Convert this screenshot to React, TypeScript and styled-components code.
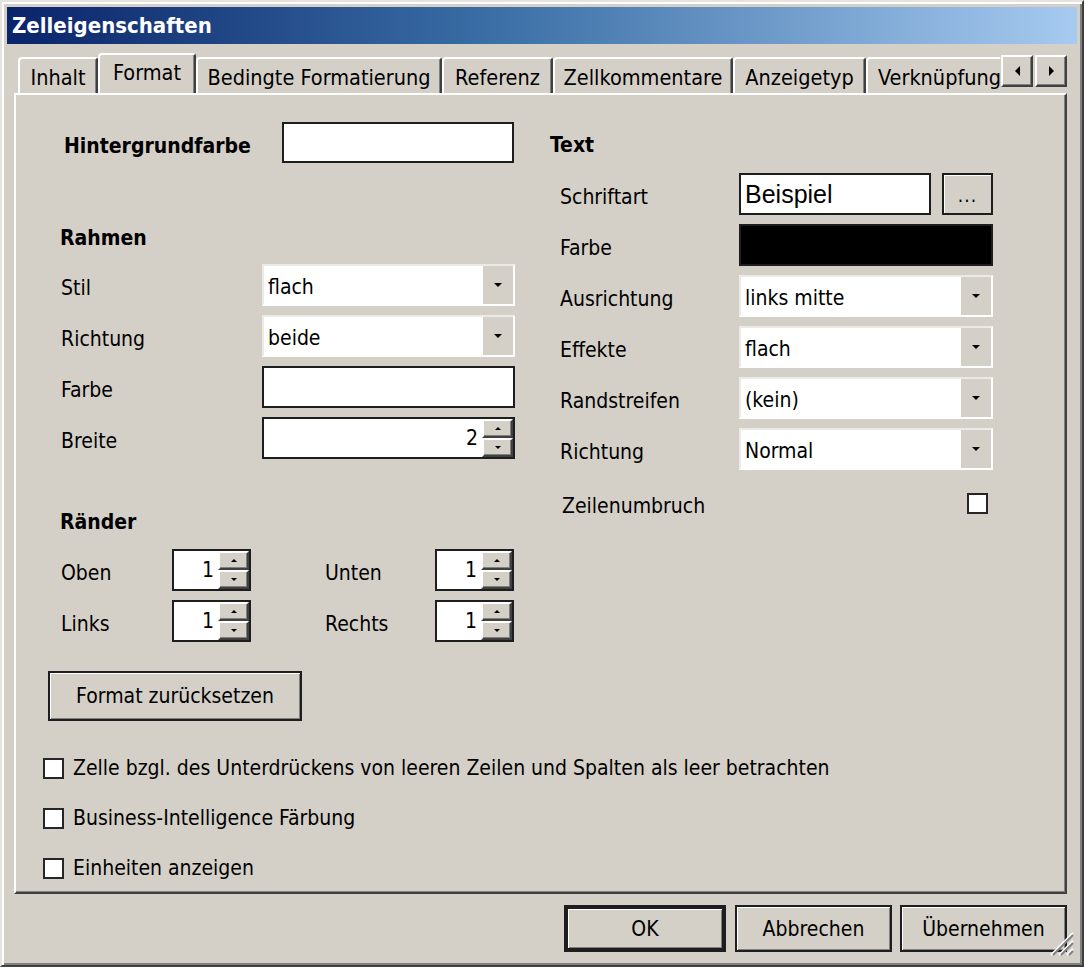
import React from "react";
import styled, { createGlobalStyle } from "styled-components";

const UI_FONT = `"DejaVu Sans Condensed", "DejaVu Sans", "Liberation Sans", sans-serif`;

const GlobalStyle = createGlobalStyle`
  html, body {
    margin: 0;
    padding: 0;
    background: #d4d0c8;
  }
  body {
    font-family: ${UI_FONT};
  }
`;

const Window = styled.div`
  position: relative;
  box-sizing: border-box;
  width: 1084px;
  height: 967px;
  display: flex;
  flex-direction: column;
  padding: 5px 5px 0 5px;
  background: #d4d0c8;
  border: 2px solid;
  border-color: #e6e3de #404040 #404040 #e6e3de;
  box-shadow: inset 2px 2px #ffffff, inset -2px -2px #808080;
  font-family: ${UI_FONT};
  font-stretch: condensed;
  font-size: 21px;
  color: #000;
`;

const TitleBar = styled.div`
  height: 37px;
  display: flex;
  align-items: center;
  padding-left: 5px;
  background: linear-gradient(to right, #0a246a 0%, #3a6ea5 45%, #a6caf0 100%);
  color: #fff;
  font-weight: bold;
  font-size: 22px;
`;

const Body = styled.div`
  display: flex;
  flex-direction: column;
  padding: 0 10px 0 7px;
`;

const TabStrip = styled.div`
  display: flex;
  height: 40px;
  margin-top: 9px;
  padding-left: 4px;
`;

const TabList = styled.div`
  flex: 1;
  display: flex;
  align-items: flex-end;
  overflow: hidden;
  position: relative;
  z-index: 1;
  font-size: 21.5px;
`;

const Tab = styled.div<{ $w: number; $active?: boolean }>`
  flex: none;
  box-sizing: border-box;
  width: ${(p) => p.$w}px;
  height: ${(p) => (p.$active ? 42 : 36)}px;
  margin-bottom: ${(p) => (p.$active ? -2 : 0)}px;
  display: flex;
  align-items: center;
  justify-content: center;
  padding-bottom: ${(p) => (p.$active ? 6 : 0)}px;
  padding-top: ${(p) => (p.$active ? 0 : 2)}px;
  background: #d4d0c8;
  border-top: 2px solid #ffffff;
  border-left: 2px solid #ffffff;
  border-right: 2px solid #404040;
  border-top-left-radius: 4px;
  border-top-right-radius: 3px;
  box-shadow: inset -1px 0 #808080;
  white-space: nowrap;
  overflow: hidden;
`;

const ClipTab = styled(Tab)`
  justify-content: flex-start;
  padding-left: 10px;
`;

const ArrowPair = styled.div`
  display: flex;
  gap: 2px;
  margin-left: 1px;
  margin-top: 2px;
`;

const ArrowButton = styled.div`
  box-sizing: border-box;
  width: 32px;
  height: 32px;
  display: flex;
  align-items: center;
  justify-content: center;
  background: #d4d0c8;
  border: 2px solid;
  border-color: #ffffff #404040 #404040 #ffffff;
  box-shadow: inset -1px -1px #808080;
`;

const Panel = styled.div`
  box-sizing: border-box;
  height: 801px;
  display: flex;
  flex-direction: column;
  border: 2px solid;
  border-color: #ffffff #404040 #404040 #ffffff;
  box-shadow: inset -1px -1px #808080;
`;

const Columns = styled.div`
  display: flex;
  padding-left: 32px;
`;

const LeftCol = styled.div`
  width: 467px;
  display: flex;
  flex-direction: column;
`;

const RightCol = styled.div`
  width: 443px;
  margin-left: 35px;
  display: flex;
  flex-direction: column;
`;

const Heading = styled.div<{ $top: number; $indent: number }>`
  height: 30px;
  line-height: 30px;
  margin-top: ${(p) => p.$top}px;
  padding-left: ${(p) => p.$indent}px;
  font-weight: bold;
`;

const BgRow = styled.div`
  display: grid;
  grid-template-columns: 218px 232px;
  align-items: center;
  height: 41px;
  margin-top: 27px;
  padding-left: 16px;
  font-weight: bold;
`;

const FieldGrid = styled.div<{ $cols: string; $top: number; $indent: number }>`
  display: grid;
  grid-template-columns: ${(p) => p.$cols};
  grid-auto-rows: 42px;
  row-gap: 9px;
  align-items: center;
  margin-top: ${(p) => p.$top}px;
  padding-left: ${(p) => p.$indent}px;
`;

const Label = styled.span`
  padding-top: 6px;
  white-space: nowrap;
`;

const EditBox = styled.div<{ $black?: boolean }>`
  box-sizing: border-box;
  height: 100%;
  background: ${(p) => (p.$black ? "#000" : "#fff")};
  border: 2px solid #1e1e1e;
`;

const FontBox = styled(EditBox)`
  width: 192px;
  display: flex;
  align-items: center;
  padding-left: 4px;
  font-family: "Liberation Sans", Arial, sans-serif;
  font-stretch: normal;
  font-size: 25px;
`;

const FontCell = styled.div`
  height: 100%;
  display: flex;
  gap: 11px;
`;

const DotsButton = styled.div`
  box-sizing: border-box;
  width: 51px;
  height: 100%;
  display: flex;
  align-items: center;
  justify-content: center;
  padding-top: 2px;
  border: 2px solid #1e1e1e;
  box-shadow: inset 1px 1px #ffffff;
  font-size: 19px;
  letter-spacing: 1px;
`;

const Combo = styled.div`
  box-sizing: border-box;
  height: 100%;
  display: flex;
  align-items: center;
  background: #fff;
  border: 2px solid;
  border-color: #eceae6 #ffffff #ffffff #eceae6;
  padding-left: 4px;
`;

const ComboValue = styled.span`
  flex: 1;
  padding-top: 3px;
  white-space: nowrap;
`;

const DropButton = styled.div`
  align-self: stretch;
  width: 30px;
  display: flex;
  align-items: center;
  justify-content: center;
  background: #d4d0c8;
`;

const Triangle = styled.span<{ $dir: "down" | "up" | "left" | "right"; $s: number }>`
  width: 0;
  height: 0;
  border-style: solid;
  border-color: transparent;
  ${(p) =>
    p.$dir === "down"
      ? `border-width: ${p.$s}px ${p.$s}px 0 ${p.$s}px; border-top-color: #000;`
      : p.$dir === "up"
      ? `border-width: 0 ${p.$s}px ${p.$s}px ${p.$s}px; border-bottom-color: #000;`
      : p.$dir === "left"
      ? `border-width: ${p.$s}px ${p.$s}px ${p.$s}px 0; border-right-color: #000;`
      : `border-width: ${p.$s}px 0 ${p.$s}px ${p.$s}px; border-left-color: #000;`}
`;

const Spin = styled.div`
  box-sizing: border-box;
  height: 100%;
  display: flex;
  background: #fff;
  border: 2px solid #1e1e1e;
`;

const SpinValue = styled.span`
  flex: 1;
  display: flex;
  align-items: center;
  justify-content: flex-end;
  padding-right: 4px;
`;

const SpinButtons = styled.div`
  width: 31px;
  display: flex;
  flex-direction: column;
`;

const SpinHalf = styled.div`
  flex: 1;
  box-sizing: border-box;
  display: flex;
  align-items: center;
  justify-content: center;
  background: #d4d0c8;
  border: 2px solid;
  border-color: #ffffff #404040 #404040 #ffffff;
  box-shadow: inset -1px -1px #808080;
`;

const PushButton = styled.div<{ $w: number; $h: number; $default?: boolean; $gap?: number }>`
  box-sizing: border-box;
  width: ${(p) => p.$w}px;
  height: ${(p) => p.$h}px;
  margin-left: ${(p) => p.$gap ?? 0}px;
  display: flex;
  align-items: center;
  justify-content: center;
  background: #d4d0c8;
  border: ${(p) => (p.$default ? 4 : 2)}px solid #1e1e1e;
  box-shadow: inset 1px 1px #ffffff, inset -1px -1px #808080;
  white-space: nowrap;
`;

const ResetWrap = styled.div`
  margin-top: 29px;
`;

const WrapRow = styled.div`
  height: 42px;
  margin-top: 12px;
  display: flex;
  align-items: center;
  justify-content: space-between;
  padding: 0 5px 0 12px;
`;

const CheckBox = styled.span`
  box-sizing: border-box;
  flex: none;
  width: 21px;
  height: 21px;
  background: #fff;
  border: 2px solid #262626;
`;

const CheckList = styled.div`
  margin-top: 22px;
  padding-left: 27px;
  display: flex;
  flex-direction: column;
`;

const CheckRow = styled.div`
  height: 50px;
  display: flex;
  align-items: center;
  gap: 9px;
  white-space: nowrap;
`;

const ButtonRow = styled.div`
  display: flex;
  justify-content: flex-end;
  margin-top: 11px;
`;

const Grip = styled.svg`
  position: absolute;
  right: 7px;
  bottom: 8px;
`;

const tabs = [
  { label: "Inhalt", w: 80 },
  { label: "Format", w: 98, active: true },
  { label: "Bedingte Formatierung", w: 246 },
  { label: "Referenz", w: 111 },
  { label: "Zellkommentare", w: 180 },
  { label: "Anzeigetyp", w: 133 },
];

const ComboField = ({ value }: { value: string }) => (
  <Combo>
    <ComboValue>{value}</ComboValue>
    <DropButton>
      <Triangle $dir="down" $s={4} />
    </DropButton>
  </Combo>
);

const SpinField = ({ value }: { value: string }) => (
  <Spin>
    <SpinValue>{value}</SpinValue>
    <SpinButtons>
      <SpinHalf>
        <Triangle $dir="up" $s={3} />
      </SpinHalf>
      <SpinHalf>
        <Triangle $dir="down" $s={3} />
      </SpinHalf>
    </SpinButtons>
  </Spin>
);

export default function App() {
  return (
    <>
      <GlobalStyle />
      <Window>
        <TitleBar>Zelleigenschaften</TitleBar>
        <Body>
          <TabStrip>
            <TabList>
              {tabs.map((t) => (
                <Tab key={t.label} $w={t.w} $active={t.active}>
                  {t.label}
                </Tab>
              ))}
              <ClipTab $w={170}>Verknüpfung</ClipTab>
            </TabList>
            <ArrowPair>
              <ArrowButton>
                <Triangle $dir="left" $s={5} />
              </ArrowButton>
              <ArrowButton>
                <Triangle $dir="right" $s={5} />
              </ArrowButton>
            </ArrowPair>
          </TabStrip>

          <Panel>
            <Columns>
              <LeftCol>
                <BgRow>
                  <Label>Hintergrundfarbe</Label>
                  <EditBox />
                </BgRow>

                <Heading $top={60} $indent={12}>
                  Rahmen
                </Heading>
                <FieldGrid $cols="201px 253px" $top={11} $indent={13}>
                  <Label>Stil</Label>
                  <ComboField value="flach" />
                  <Label>Richtung</Label>
                  <ComboField value="beide" />
                  <Label>Farbe</Label>
                  <EditBox />
                  <Label>Breite</Label>
                  <SpinField value="2" />
                </FieldGrid>

                <Heading $top={48} $indent={12}>
                  Ränder
                </Heading>
                <FieldGrid $cols="111px 79px 74px 110px 79px" $top={12} $indent={13}>
                  <Label>Oben</Label>
                  <SpinField value="1" />
                  <span />
                  <Label>Unten</Label>
                  <SpinField value="1" />
                  <Label>Links</Label>
                  <SpinField value="1" />
                  <span />
                  <Label>Rechts</Label>
                  <SpinField value="1" />
                </FieldGrid>

                <ResetWrap>
                  <PushButton $w={254} $h={50}>
                    Format zurücksetzen
                  </PushButton>
                </ResetWrap>
              </LeftCol>

              <RightCol>
                <Heading $top={35} $indent={0}>
                  Text
                </Heading>
                <FieldGrid $cols="179px 254px" $top={13} $indent={10}>
                  <Label>Schriftart</Label>
                  <FontCell>
                    <FontBox>Beispiel</FontBox>
                    <DotsButton>...</DotsButton>
                  </FontCell>
                  <Label>Farbe</Label>
                  <EditBox $black />
                  <Label>Ausrichtung</Label>
                  <ComboField value="links mitte" />
                  <Label>Effekte</Label>
                  <ComboField value="flach" />
                  <Label>Randstreifen</Label>
                  <ComboField value="(kein)" />
                  <Label>Richtung</Label>
                  <ComboField value="Normal" />
                </FieldGrid>
                <WrapRow>
                  <Label>Zeilenumbruch</Label>
                  <CheckBox />
                </WrapRow>
              </RightCol>
            </Columns>

            <CheckList>
              <CheckRow>
                <CheckBox />
                Zelle bzgl. des Unterdrückens von leeren Zeilen und Spalten als leer betrachten
              </CheckRow>
              <CheckRow>
                <CheckBox />
                Business-Intelligence Färbung
              </CheckRow>
              <CheckRow>
                <CheckBox />
                Einheiten anzeigen
              </CheckRow>
            </CheckList>
          </Panel>

          <ButtonRow>
            <PushButton $w={162} $h={47} $default>
              OK
            </PushButton>
            <PushButton $w={157} $h={47} $gap={9}>
              Abbrechen
            </PushButton>
            <PushButton $w={167} $h={47} $gap={8}>
              Übernehmen
            </PushButton>
          </ButtonRow>
        </Body>
        <Grip width="30" height="30" viewBox="0 0 30 30">
          <g strokeWidth="2">
            <line x1="28" y1="6" x2="6" y2="28" stroke="#fff" />
            <line x1="28" y1="8" x2="8" y2="28" stroke="#808080" />
            <line x1="28" y1="14" x2="14" y2="28" stroke="#fff" />
            <line x1="28" y1="16" x2="16" y2="28" stroke="#808080" />
            <line x1="28" y1="22" x2="22" y2="28" stroke="#fff" />
            <line x1="28" y1="24" x2="24" y2="28" stroke="#808080" />
          </g>
        </Grip>
      </Window>
    </>
  );
}
